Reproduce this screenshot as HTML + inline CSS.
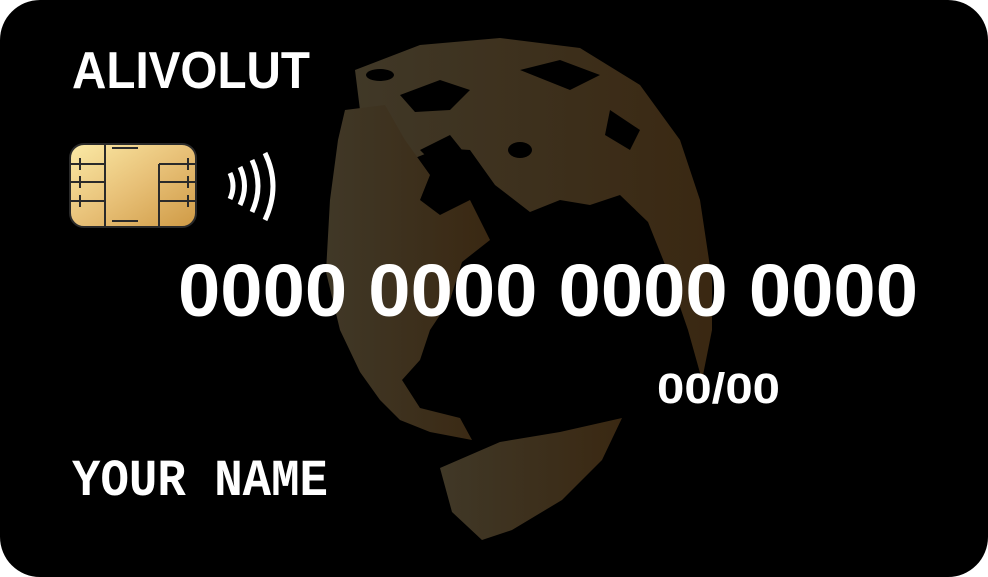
<!DOCTYPE html>
<html><head><meta charset="utf-8"><style>
html,body{margin:0;padding:0;background:#fff;width:988px;height:577px;overflow:hidden}
svg{display:block}
</style></head><body>
<svg width="988" height="577" viewBox="0 0 988 577" xmlns="http://www.w3.org/2000/svg">
<defs>
<linearGradient id="g" x1="0" y1="0" x2="1" y2="0">
<stop offset="0" stop-color="#403827"/><stop offset="1" stop-color="#3a2812"/>
</linearGradient>
<linearGradient id="chip" x1="0" y1="0" x2="1" y2="1">
<stop offset="0" stop-color="#fbeaa6"/><stop offset="0.5" stop-color="#e8c178"/><stop offset="1" stop-color="#cf9a45"/>
</linearGradient>
</defs>
<rect x="0" y="0" width="988" height="577" rx="40" fill="#000"/>
<g fill="url(#g)">
<!-- arctic cap -->
<polygon points="355,70 420,45 500,38 580,48 640,85 680,140 700,200 712,280 712,330 702,380 688,330 668,272 648,222 620,195 590,205 560,200 530,212 495,185 470,150 440,148 410,160 385,130 360,110"/>
<!-- north america -->
<polygon points="345,110 385,105 405,140 430,175 420,200 440,215 470,200 490,240 462,262 450,300 430,330 420,360 402,380 420,408 460,418 472,440 430,432 400,420 380,400 360,372 340,330 326,272 330,200 338,140"/>
<!-- south america -->
<polygon points="440,468 500,442 560,432 622,418 602,460 562,500 512,530 482,540 452,512"/>
</g>
<g fill="#000">
<polygon points="400,95 440,80 470,90 450,110 415,112"/>
<polygon points="520,70 560,60 600,75 570,90"/>
<polygon points="610,110 640,130 630,150 605,135"/>
<polygon points="420,150 450,135 470,160 445,175"/>
<ellipse cx="520" cy="150" rx="12" ry="8"/>
<ellipse cx="380" cy="75" rx="14" ry="6"/>
</g>
<!-- chip -->
<rect x="70" y="144" width="126" height="83" rx="14" fill="url(#chip)" stroke="#2a2a2a" stroke-width="2"/>
<g stroke="#2a2a2a" stroke-width="2" fill="none">
<line x1="105" y1="144" x2="105" y2="227"/>
<line x1="159" y1="164" x2="159" y2="227"/>
<line x1="70" y1="164" x2="105" y2="164"/>
<line x1="70" y1="182" x2="105" y2="182"/>
<line x1="70" y1="201" x2="105" y2="201"/>
<line x1="159" y1="164" x2="196" y2="164"/>
<line x1="159" y1="182" x2="196" y2="182"/>
<line x1="159" y1="201" x2="196" y2="201"/>
<line x1="112" y1="148" x2="138" y2="148"/>
<line x1="112" y1="221" x2="138" y2="221"/>
<line x1="80" y1="158" x2="80" y2="170"/><line x1="80" y1="176" x2="80" y2="188"/><line x1="80" y1="195" x2="80" y2="207"/>
<line x1="188" y1="158" x2="188" y2="170"/><line x1="188" y1="176" x2="188" y2="188"/><line x1="188" y1="195" x2="188" y2="207"/>
</g>
<!-- contactless -->
<g stroke="#fff" stroke-width="5" fill="none">
<path d="M230,173 Q236,186 230,199"/>
<path d="M240,167 Q249,186 240,205"/>
<path d="M252,160 Q264,186 252,212"/>
<path d="M265,153 Q281,186 265,220"/>
</g>
<g fill="#fff" font-family="Liberation Sans, sans-serif" font-weight="bold">
<text x="72" y="88" font-size="52" textLength="238" lengthAdjust="spacingAndGlyphs">ALIVOLUT</text>
<text x="178" y="316" font-size="74" textLength="740" lengthAdjust="spacingAndGlyphs">0000 0000 0000 0000</text>
<text x="657" y="403" font-size="43" textLength="123" lengthAdjust="spacingAndGlyphs">00/00</text>
</g>
<text x="72" y="495" fill="#fff" font-family="Liberation Mono, monospace" font-weight="bold" font-size="52" textLength="256" lengthAdjust="spacingAndGlyphs">YOUR NAME</text>
</svg>
</body></html>
